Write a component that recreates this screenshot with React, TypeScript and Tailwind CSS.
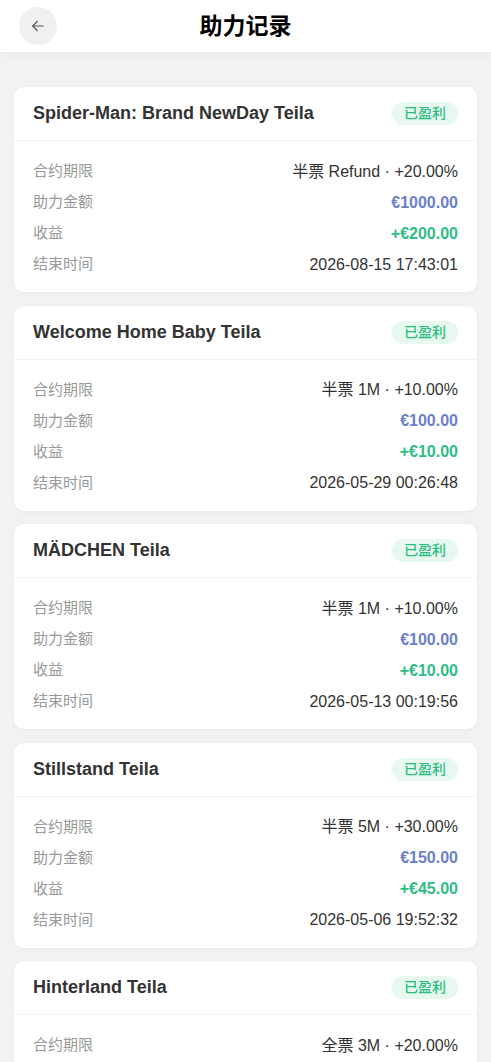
import React from 'react';

const records = [
  { title: 'Spider-Man: Brand NewDay Teila', term: '半票 Refund · +20.00%', amount: '€1000.00', profit: '+€200.00', end: '2026-08-15 17:43:01' },
  { title: 'Welcome Home Baby Teila', term: '半票 1M · +10.00%', amount: '€100.00', profit: '+€10.00', end: '2026-05-29 00:26:48' },
  { title: 'MÄDCHEN Teila', term: '半票 1M · +10.00%', amount: '€100.00', profit: '+€10.00', end: '2026-05-13 00:19:56' },
  { title: 'Stillstand Teila', term: '半票 5M · +30.00%', amount: '€150.00', profit: '+€45.00', end: '2026-05-06 19:52:32' },
  { title: 'Hinterland Teila', term: '全票 3M · +20.00%', amount: '€100.00', profit: '+€20.00', end: '2026-04-30 12:10:05' },
];

const Row: React.FC<{ label: string; children: React.ReactNode }> = ({ label, children }) => (
  <div className="flex h-[31px] items-center justify-between">
    <span className="text-[15px] text-[#999]">{label}</span>
    {children}
  </div>
);

export default function App() {
  return (
    <div className="min-h-screen bg-[#f2f2f2] font-['Liberation_Sans','Noto_Sans_CJK_SC',sans-serif]">
      {/* Header */}
      <div className="relative flex h-[52px] items-center justify-center bg-white shadow-[0_2px_10px_rgba(0,0,0,0.04)]">
        <button className="absolute left-[19px] top-[7px] flex h-[38px] w-[38px] items-center justify-center rounded-full bg-[#f0f0f0]">
          <svg width="18" height="18" viewBox="0 0 24 24" fill="none" stroke="#555" strokeWidth="1.6" strokeLinecap="round" strokeLinejoin="round">
            <path d="M19 12H5" />
            <path d="M11 6l-6 6 6 6" />
          </svg>
        </button>
        <h1 className="text-[23px] font-bold text-black">助力记录</h1>
      </div>

      {/* List */}
      <div className="flex flex-col gap-[13.5px] px-[14px] pt-[35px] pb-6">
        {records.map((r) => (
          <div key={r.title} className="rounded-[10px] bg-white shadow-[0_1px_4px_rgba(0,0,0,0.04)]">
            <div className="flex h-[54px] items-center justify-between border-b border-[#f2f2f2] px-[19px]">
              <span className="text-[18px] font-bold text-[#333]">{r.title}</span>
              <span className="flex h-[23px] w-[66px] items-center justify-center rounded-full bg-[#e6f8ef] text-[14px] font-medium text-[#2bbd7e]">已盈利</span>
            </div>
            <div className="px-[19px] pt-[15px] pb-[12px]">
              <Row label="合约期限">
                <span className="text-[16px] text-[#333]">{r.term}</span>
              </Row>
              <Row label="助力金额">
                <span className="text-[16px] font-bold text-[#6b7fcb]">{r.amount}</span>
              </Row>
              <Row label="收益">
                <span className="text-[16px] font-bold text-[#2ebd85]">{r.profit}</span>
              </Row>
              <Row label="结束时间">
                <span className="text-[16px] text-[#333]">{r.end}</span>
              </Row>
            </div>
          </div>
        ))}
      </div>
    </div>
  );
}
